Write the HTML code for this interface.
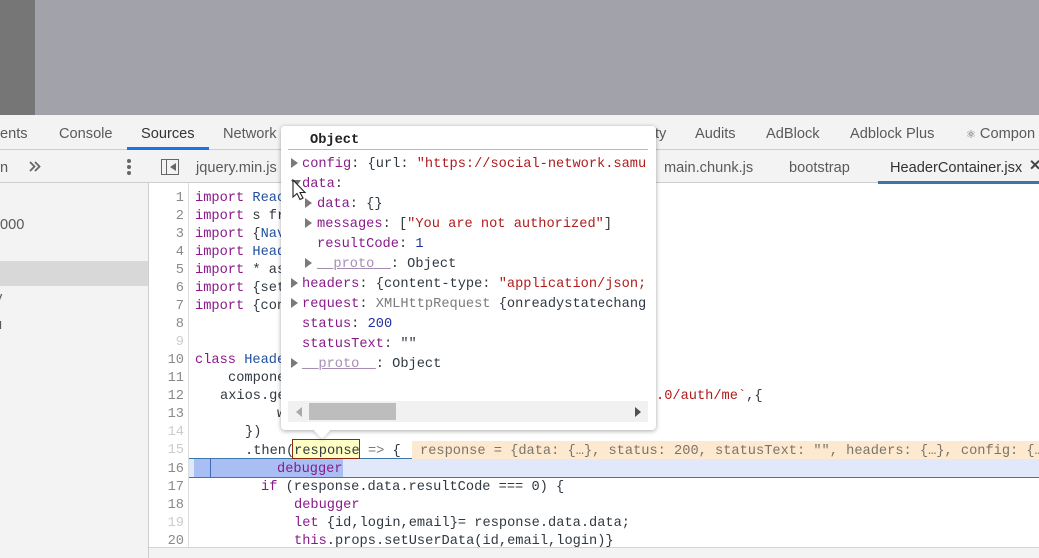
<!DOCTYPE html>
<html><head><meta charset="utf-8">
<style>
html,body{margin:0;padding:0;background:#fff}
#r{position:relative;width:1039px;height:558px;overflow:hidden;background:#fff;font-family:"Liberation Sans",sans-serif}
.b{position:absolute}
.t{position:absolute;white-space:pre;font-size:14.6px;line-height:20px;color:#5a5a5a;margin-top:1px}
.m{position:absolute;white-space:pre;font-family:"Liberation Mono",monospace;font-size:13.67px;line-height:18px;color:#303942;margin-top:2px}
.n{position:absolute;white-space:pre;font-family:"Liberation Mono",monospace;font-size:13.67px;line-height:18px;color:#8a8a8a;text-align:right;width:30px;left:154px;margin-top:2px}
.p{position:absolute;white-space:pre;font-family:"Liberation Mono",monospace;font-size:13.67px;line-height:20px;color:#303942;margin-top:2px}
.k{color:#8a1a8a}.f{color:#1f4f9e}.s{color:#b01c1c}.g{color:#9a7fa8}.d{color:#222fa0}.x{color:#7a7a7a}.u{color:#a68db5;text-decoration:underline}
.a{position:absolute;width:0;height:0;border-top:5px solid transparent;border-bottom:5px solid transparent;border-left:7px solid #7a7a7a}
</style></head><body><div id="r">
<div class="b" style="left:0;top:0;width:1039px;height:115px;background:#a2a2ab"></div>
<div class="b" style="left:0;top:0;width:35px;height:115px;background:#767676"></div>
<div class="b" style="left:0;top:115px;width:1039px;height:35px;background:#f3f3f3;border-bottom:1px solid #cdcdcd;box-sizing:border-box"></div>
<div class="b" style="left:0;top:150px;width:1039px;height:33px;background:#f3f3f3;border-bottom:1px solid #cdcdcd;box-sizing:border-box"></div>
<div class="b" style="left:127px;top:147px;width:82px;height:3px;background:#1a73e8"></div>
<div class="t" style="left:0;top:123px">ents</div>
<div class="t" style="left:59px;top:123px">Console</div>
<div class="t" style="left:141px;top:123px;color:#333">Sources</div>
<div class="t" style="left:223px;top:123px">Network</div>
<div class="t" style="left:655px;top:123px">ty</div>
<div class="t" style="left:695px;top:123px">Audits</div>
<div class="t" style="left:766px;top:123px">AdBlock</div>
<div class="t" style="left:850px;top:123px">Adblock Plus</div>
<div class="t" style="left:966px;top:123px"><span style="font-size:11px">⚛</span> Compon</div>
<div class="t" style="left:0;top:157px">n</div>
<svg class="b" style="left:29px;top:161px" width="12" height="11" viewBox="0 0 12 11"><path d="M1 1L5.500 5.500L1 10M6 1L10.500 5.500L6 10" fill="none" stroke="#666" stroke-width="1.800"/></svg>
<div class="b" style="left:127px;top:159px;width:4px;height:4px;border-radius:2px;background:#666"></div>
<div class="b" style="left:127px;top:165px;width:4px;height:4px;border-radius:2px;background:#666"></div>
<div class="b" style="left:127px;top:171px;width:4px;height:4px;border-radius:2px;background:#666"></div>
<div class="b" style="left:161px;top:159px;width:18px;height:16px;border:1px solid #666;box-sizing:border-box"></div>
<div class="b" style="left:166px;top:159px;width:1px;height:16px;background:#666"></div>
<div class="b" style="left:170px;top:163px;width:0;height:0;border-top:4px solid transparent;border-bottom:4px solid transparent;border-right:6px solid #666"></div>
<div class="t" style="left:196px;top:157px">jquery.min.js</div>
<div class="t" style="left:664px;top:157px">main.chunk.js</div>
<div class="t" style="left:789px;top:157px">bootstrap</div>
<div class="t" style="left:890px;top:157px;color:#333">HeaderContainer.jsx</div>
<div class="t" style="left:1029px;top:155px;color:#444;font-weight:bold">✕</div>
<div class="b" style="left:878px;top:181px;width:161px;height:3px;background:#3a76a8"></div>
<div class="b" style="left:0;top:183px;width:148px;height:375px;background:#f3f3f3;border-right:1px solid #cdcdcd"></div>
<div class="b" style="left:0;top:261px;width:148px;height:25px;background:#d8d8d8"></div>
<div class="t" style="left:0;top:214px">000</div>
<div class="t" style="left:-5px;top:287px">y</div>
<div class="t" style="left:-6px;top:314px">u</div>
<div class="b" style="left:188px;top:183px;width:1px;height:365px;background:#dcdcdc"></div>
<div class="n" style="top:188px">1</div><div class="n" style="top:206px">2</div><div class="n" style="top:224px">3</div><div class="n" style="top:242px">4</div><div class="n" style="top:260px">5</div><div class="n" style="top:278px">6</div><div class="n" style="top:296px">7</div><div class="n" style="top:314px">8</div>
<div class="n" style="top:332px;color:#ccc">9</div><div class="n" style="top:350px">10</div><div class="n" style="top:368px">11</div><div class="n" style="top:386px">12</div><div class="n" style="top:404px">13</div><div class="n" style="top:422px;color:#ccc">14</div><div class="n" style="top:440px;color:#ccc">15</div><div class="n" style="top:459px">16</div><div class="n" style="top:477px">17</div><div class="n" style="top:495px">18</div><div class="n" style="top:513px;color:#ccc">19</div><div class="n" style="top:531px">20</div>
<div class="m" style="left:195px;top:188px"><span class="k">import</span> <span class="f">React</span></div>
<div class="m" style="left:195px;top:206px"><span class="k">import</span> s fr</div>
<div class="m" style="left:195px;top:224px"><span class="k">import</span> {<span class="f">NavLink</span></div>
<div class="m" style="left:195px;top:242px"><span class="k">import</span> <span class="f">Header</span></div>
<div class="m" style="left:195px;top:260px"><span class="k">import</span> * as</div>
<div class="m" style="left:195px;top:278px"><span class="k">import</span> {setU</div>
<div class="m" style="left:195px;top:296px"><span class="k">import</span> {conn</div>
<div class="m" style="left:195px;top:350px"><span class="k">class</span> <span class="f">Header</span></div>
<div class="m" style="left:228px;top:368px">component</div>
<div class="m" style="left:220px;top:386px">axios.get</div>
<div class="m" style="left:277px;top:404px">w</div>
<div class="m" style="left:245px;top:422px">})</div>
<div class="m" style="left:656px;top:386px"><span class="s">.0/auth/me`</span>,{</div>
<div class="b" style="left:189px;top:458px;width:850px;height:20px;background:#e1e8fa;border-bottom:1px solid #3f76ac;box-sizing:border-box"></div>
<div class="b" style="left:189px;top:458px;width:224px;height:1px;background:#3f76ac"></div>
<div class="b" style="left:194px;top:459px;width:149px;height:18px;background:#a9bff4"></div>
<div class="b" style="left:210px;top:458px;width:1px;height:19px;background:#3f6bb0"></div>
<div class="b" style="left:412px;top:441px;width:627px;height:18px;background:#fde8d0"></div>
<div class="b" style="left:292px;top:439px;width:68px;height:20px;background:#ffffc4;border:1px solid #8a2a10;box-sizing:border-box"></div>
<div class="m" style="left:245px;top:441px">.then(response <span class="x">=&gt;</span> {</div>
<div class="m" style="left:420px;top:441px;color:#7a756a">response = {data: {…}, status: 200, statusText: "", headers: {…}, config: {…</div>
<div class="m k" style="left:277px;top:459px">debugger</div>
<div class="m" style="left:261px;top:477px"><span class="k">if</span> (response.data.resultCode === 0) {</div>
<div class="m k" style="left:294px;top:495px">debugger</div>
<div class="m" style="left:294px;top:513px"><span class="k">let</span> {id,login,email}= response.data.data;</div>
<div class="m" style="left:294px;top:531px"><span class="k">this</span>.props.setUserData(id,email,login)}</div>
<div class="b" style="left:149px;top:547px;width:890px;height:11px;background:#f3f3f3;border-top:1px solid #d4d4d4;box-sizing:border-box"></div>
<div class="b" style="left:316px;top:424px;width:12px;height:12px;background:#fff;transform:rotate(45deg);box-shadow:2px 2px 3px rgba(0,0,0,.12)"></div>
<div class="b" style="left:281px;top:126px;width:375px;height:304px;background:#fff;border-radius:4px;box-shadow:0 1px 5px rgba(0,0,0,.35)"></div>
<div class="b" style="left:316px;top:424px;width:12px;height:12px;background:#fff;transform:rotate(45deg)"></div>
<div class="p" style="left:310px;top:130px;font-weight:bold;color:#222;margin-top:-1px;margin-top:1px">Object</div>
<div class="b" style="left:288px;top:149px;width:360px;height:1px;background:#b9b9b9"></div>
<div class="a" style="left:291px;top:158px"></div>
<div class="p" style="left:302px;top:153px"><span class="k">config</span>: {url: <span class="s">"https://social-network.samu</span></div>
<div class="p" style="left:302px;top:173px"><span class="k">data</span>:</div>
<div class="a" style="left:305px;top:198px"></div>
<div class="p" style="left:317px;top:193px"><span class="k">data</span>: {}</div>
<div class="a" style="left:305px;top:218px"></div>
<div class="p" style="left:317px;top:213px"><span class="k">messages</span>: [<span class="s">"You are not authorized"</span>]</div>
<div class="p" style="left:317px;top:233px"><span class="k">resultCode</span>: <span class="d">1</span></div>
<div class="a" style="left:305px;top:258px"></div>
<div class="p" style="left:317px;top:253px"><span class="u">__proto__</span>: Object</div>
<div class="a" style="left:291px;top:278px"></div>
<div class="p" style="left:302px;top:273px"><span class="k">headers</span>: {content-type: <span class="s">"application/json;</span></div>
<div class="a" style="left:291px;top:298px"></div>
<div class="p" style="left:302px;top:293px"><span class="k">request</span>: <span class="x">XMLHttpRequest</span> {onreadystatechang</div>
<div class="p" style="left:302px;top:313px"><span class="k">status</span>: <span class="d">200</span></div>
<div class="p" style="left:302px;top:333px"><span class="k">statusText</span>: ""</div>
<div class="a" style="left:291px;top:358px"></div>
<div class="p" style="left:302px;top:353px"><span class="u">__proto__</span>: Object</div>
<div class="b" style="left:288px;top:401px;width:360px;height:21px;background:#f1f1f1"></div>
<div class="b" style="left:309px;top:403px;width:87px;height:17px;background:#bdbdbd"></div>
<div class="b" style="left:296px;top:407px;width:0;height:0;border-top:5px solid transparent;border-bottom:5px solid transparent;border-right:6px solid #a8a8a8"></div>
<div class="b" style="left:635px;top:407px;width:0;height:0;border-top:5px solid transparent;border-bottom:5px solid transparent;border-left:6px solid #505050"></div>
<div class="b" style="left:291px;top:180px;width:0;height:0;border-left:5px solid transparent;border-right:5px solid transparent;border-top:7px solid #6e6e6e"></div>
<svg class="b" style="left:290px;top:178px" width="20" height="24" viewBox="0 0 20 24"><path d="M3 2V19L7 15.500L10 21.500L13 20L10 14.500H15Z" fill="#fff" stroke="#222" stroke-width="1.100"/></svg>
</div></body></html>
